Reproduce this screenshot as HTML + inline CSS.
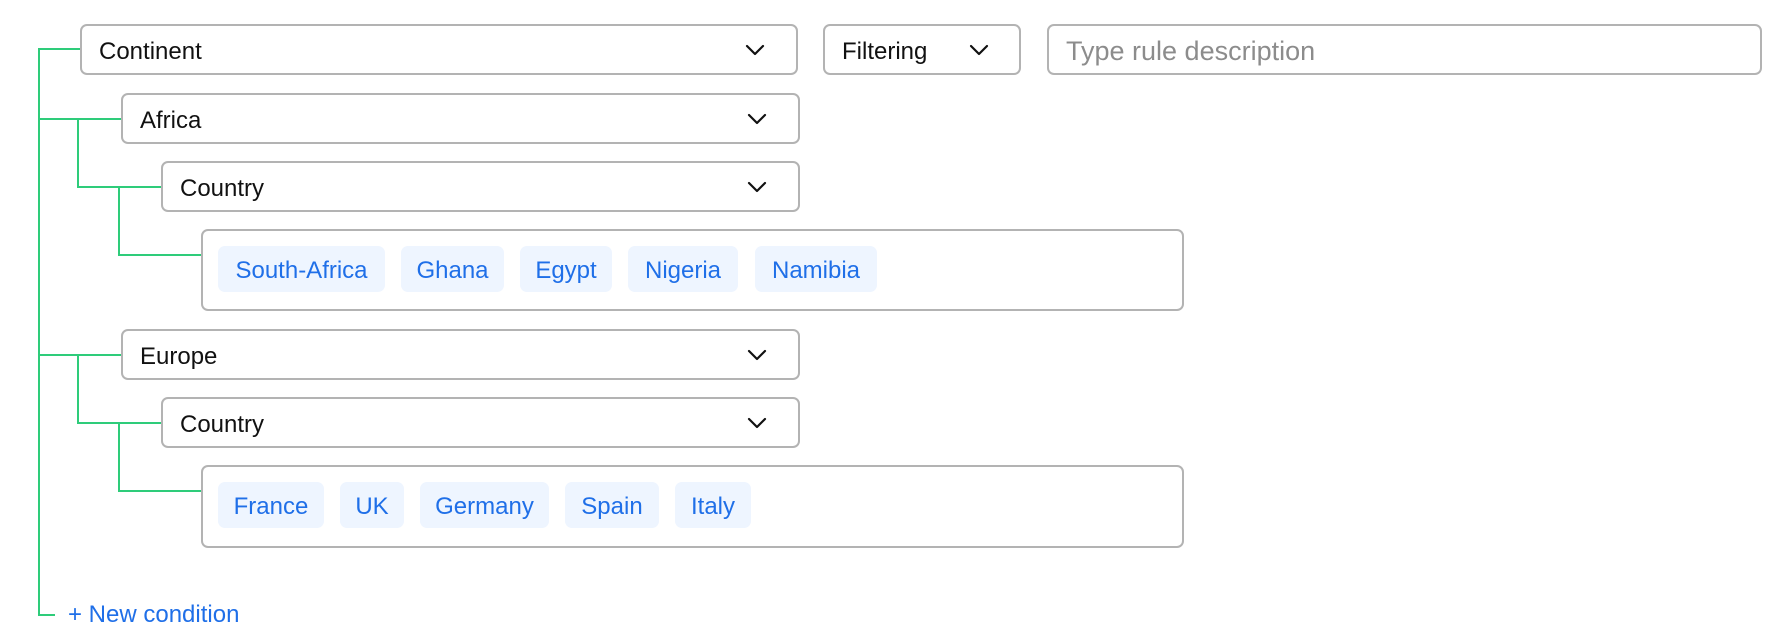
<!DOCTYPE html>
<html><head><meta charset="utf-8"><style>
html,body{margin:0;padding:0;background:#fff;width:1782px;height:640px;overflow:hidden;font-family:"Liberation Sans",Arial,sans-serif;}
.b{position:absolute;box-sizing:border-box;border:2px solid #b3b3b3;border-radius:7px;background:#fff;}
.sel{font-size:24px;color:#111;line-height:51px;padding-left:17px;}
.chev{position:absolute;top:50%;width:20px;height:12px;margin-top:-6px;}
.g{position:absolute;background:#2ecc7a;}
.tag{position:absolute;background:#eef5ff;border-radius:7px;color:#1f6fe8;font-size:24px;text-align:center;line-height:50px;height:46px;overflow:hidden;}
</style></head><body>
<svg width="0" height="0" style="position:absolute"><defs><symbol id="cv" viewBox="0 0 20 12"><path d="M2 2 L10 10 L18 2" fill="none" stroke="#111" stroke-width="2.2" stroke-linecap="round" stroke-linejoin="round"/></symbol></defs></svg>

<div class="g" style="left:38px;top:48px;width:2px;height:568px"></div>
<div class="g" style="left:38px;top:48px;width:43px;height:2px"></div>
<div class="g" style="left:38px;top:118px;width:84px;height:2px"></div>
<div class="g" style="left:77px;top:118px;width:2px;height:70px"></div>
<div class="g" style="left:77px;top:186px;width:84px;height:2px"></div>
<div class="g" style="left:118px;top:186px;width:2px;height:70px"></div>
<div class="g" style="left:118px;top:254px;width:83px;height:2px"></div>
<div class="g" style="left:38px;top:354px;width:84px;height:2px"></div>
<div class="g" style="left:77px;top:354px;width:2px;height:70px"></div>
<div class="g" style="left:77px;top:422px;width:84px;height:2px"></div>
<div class="g" style="left:118px;top:422px;width:2px;height:70px"></div>
<div class="g" style="left:118px;top:490px;width:83px;height:2px"></div>
<div class="g" style="left:38px;top:614px;width:17px;height:2px"></div>

<div class="b sel" style="left:80px;top:24px;width:718px;height:51px">Continent<svg class="chev" style="right:31px"><use href="#cv"/></svg></div>
<div class="b sel" style="left:823px;top:24px;width:198px;height:51px">Filtering<svg class="chev" style="right:30px"><use href="#cv"/></svg></div>
<div class="b" style="left:1047px;top:24px;width:715px;height:51px;font-size:27px;color:#8c8c8c;line-height:50px;padding-left:17px">Type rule description</div>

<div class="b sel" style="left:121px;top:93px;width:679px;height:51px">Africa<svg class="chev" style="right:31px"><use href="#cv"/></svg></div>
<div class="b sel" style="left:161px;top:161px;width:639px;height:51px">Country<svg class="chev" style="right:31px"><use href="#cv"/></svg></div>
<div class="b" style="left:201px;top:229px;width:983px;height:82px"></div>
<div class="tag" style="left:218px;top:246px;width:167px">South-Africa</div>
<div class="tag" style="left:401px;top:246px;width:103px">Ghana</div>
<div class="tag" style="left:520px;top:246px;width:92px">Egypt</div>
<div class="tag" style="left:628px;top:246px;width:110px">Nigeria</div>
<div class="tag" style="left:755px;top:246px;width:122px">Namibia</div>

<div class="b sel" style="left:121px;top:329px;width:679px;height:51px">Europe<svg class="chev" style="right:31px"><use href="#cv"/></svg></div>
<div class="b sel" style="left:161px;top:397px;width:639px;height:51px">Country<svg class="chev" style="right:31px"><use href="#cv"/></svg></div>
<div class="b" style="left:201px;top:465px;width:983px;height:83px"></div>
<div class="tag" style="left:218px;top:482px;width:106px">France</div>
<div class="tag" style="left:340px;top:482px;width:64px">UK</div>
<div class="tag" style="left:420px;top:482px;width:129px">Germany</div>
<div class="tag" style="left:565px;top:482px;width:94px">Spain</div>
<div class="tag" style="left:675px;top:482px;width:76px">Italy</div>

<div style="position:absolute;left:68px;top:600px;font-size:24px;color:#1f6fe8;line-height:30px">+ New condition</div>
</body></html>
